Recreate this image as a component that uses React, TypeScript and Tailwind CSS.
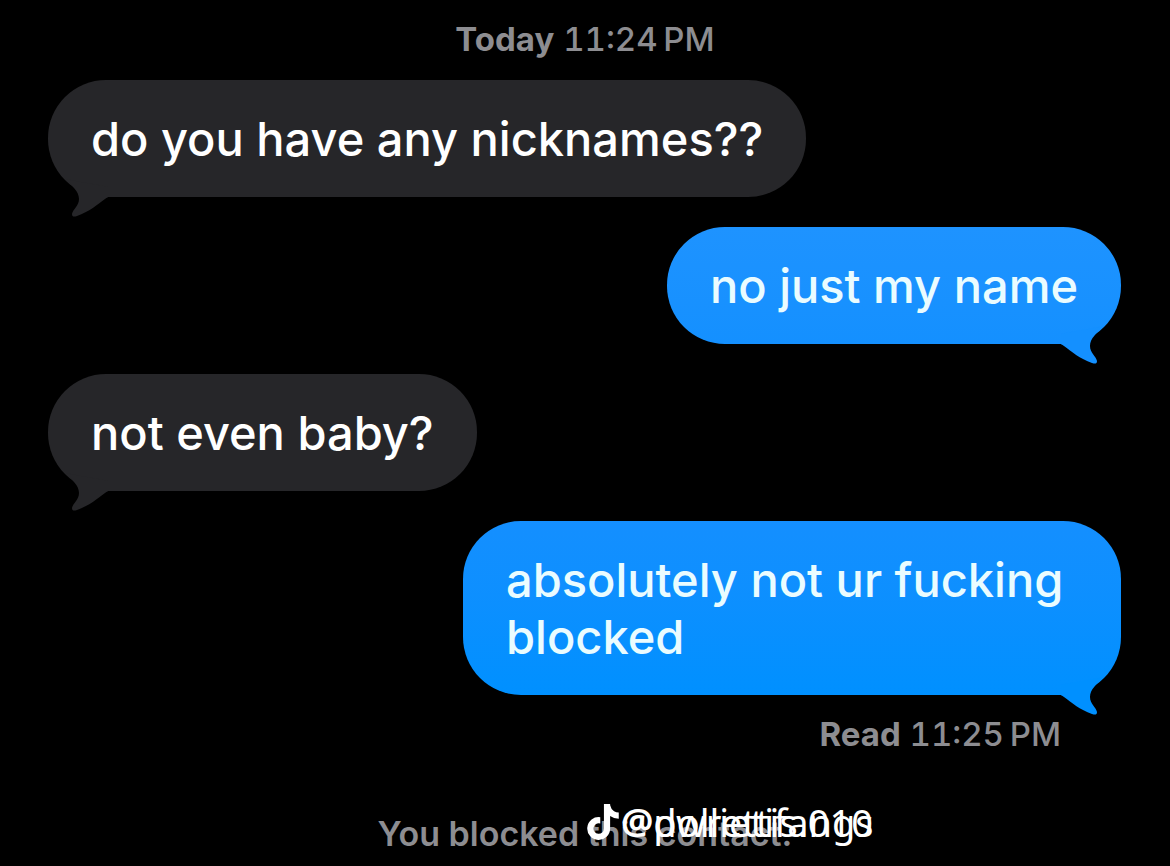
import { ReactNode } from 'react';
import { FaTiktok } from 'react-icons/fa6';

interface Message {
  id: number;
  text: string;
  sent: boolean;
  color: string;
}

const messages: Message[] = [
  { id: 1, text: 'do you have any nicknames??', sent: false, color: 'bg-[#262629] text-[#262629]' },
  {
    id: 2,
    text: 'no just my name',
    sent: true,
    color: 'bg-linear-to-b from-[#1e93ff] to-[#1490ff] text-[#1490ff]',
  },
  { id: 3, text: 'not even baby?', sent: false, color: 'bg-[#262629] text-[#262629]' },
  {
    id: 4,
    text: 'absolutely not ur fucking blocked',
    sent: true,
    color: 'bg-linear-to-b from-[#148fff] to-[#0090ff] text-[#0090ff]',
  },
];

function Tail({ sent }: { sent: boolean }) {
  return (
    <svg
      viewBox="0 0 60 56"
      className={`absolute top-full -mt-9 h-14 w-[60px] ${sent ? 'right-0 -scale-x-100' : 'left-0'}`}
      fill="currentColor"
      aria-hidden="true"
    >
      <path d="M17 18C24 25 31 30 31 38C31 45 25 48 24 53C24 56 26 56 29 55C41 51 50 43 57 38Q59 36 62 36V26Z" />
    </svg>
  );
}

function Bubble({ message }: { message: Message }) {
  const { text, sent, color } = message;

  return (
    <li
      className={`relative rounded-[58px] px-[43px] py-[30px] ${color} ${
        sent ? 'max-w-[658px] self-end' : 'max-w-full self-start'
      }`}
    >
      <Tail sent={sent} />
      <p className={`relative text-[47px] leading-[57px] font-medium ${sent ? 'text-[#eafcff]' : 'text-white'}`}>
        {text}
      </p>
    </li>
  );
}

function Stamp({ label, children }: { label: string; children: ReactNode }) {
  return (
    <p className="text-[33px] leading-10 font-medium text-[#8d8d91] tabular-nums">
      <span className="font-bold">{label}</span> {children}
    </p>
  );
}

export default function App() {
  return (
    <main className="min-h-screen bg-black pt-[19px] font-['Inter',sans-serif]">
      <header className="flex justify-center">
        <Stamp label="Today">11:24{'\u2009'}PM</Stamp>
      </header>

      <ul className="mt-[21px] flex flex-col gap-[30px] pr-[49px] pl-12">
        {messages.map((message) => (
          <Bubble key={message.id} message={message} />
        ))}
      </ul>

      <div className="mt-[19px] flex justify-end pr-[109px]">
        <Stamp label="Read">11:25{'\u2009'}PM</Stamp>
      </div>

      <footer className="relative mt-[60px] flex justify-center pb-3">
        <p className="text-[34px] leading-10 font-semibold text-[#8d8d91]">You blocked this contact.</p>
        <div className="absolute -top-3 left-1/2 flex h-10 items-center text-white">
          <FaTiktok className="size-9" />
          <span className="font-['Noto_Sans',sans-serif] text-[36px] leading-10 font-bold">@</span>
          <span className="grid font-['Noto_Sans',sans-serif] text-[38px] leading-10">
            <span className="col-start-1 row-start-1">pwrettis.010</span>
            <span className="col-start-1 row-start-1">dollietifangs</span>
          </span>
        </div>
      </footer>
    </main>
  );
}
